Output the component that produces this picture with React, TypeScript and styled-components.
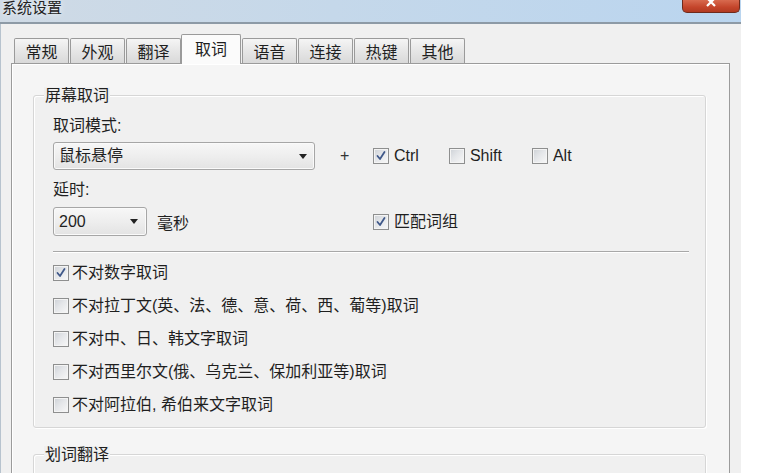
import React from "react";
import styled, { createGlobalStyle } from "styled-components";

const Global = createGlobalStyle`
  html, body { margin: 0; padding: 0; background: #ffffff; }
  body {
    font-family: "Liberation Sans", "Noto Sans CJK SC", sans-serif;
    font-size: 16px;
    color: #1f1f1f;
  }
  * { box-sizing: border-box; }
`;

const Page = styled.div`
  width: 776px;
  height: 473px;
  overflow: hidden;
  background: #ffffff;
`;

const Window = styled.div`
  width: 741px;
  height: 473px;
  display: flex;
  flex-direction: column;
  background: #f0f0f0;
  overflow: hidden;
`;

const TitleBar = styled.div`
  flex: none;
  height: 24px;
  display: flex;
  align-items: flex-start;
  justify-content: space-between;
  background: linear-gradient(90deg, #cfdae5 0%, #c5d8ea 45%, #bad5ef 100%);
  border-bottom: 2px solid #8d9aa6;
  overflow: hidden;
`;

const TitleText = styled.div`
  margin: 0 0 0 2px;
  font-size: 15px;
  line-height: 15px;
  color: #222;
  text-shadow: 0 0 6px rgba(255, 255, 255, 0.9);
`;

const CloseButton = styled.div`
  width: 58px;
  height: 13px;
  margin-right: 1px;
  display: flex;
  align-items: flex-start;
  justify-content: center;
  background: linear-gradient(180deg, #d86a4f 0%, #c4452b 60%, #b13a22 100%);
  border: 1px solid #6f2a1c;
  border-top: none;
  border-radius: 0 0 5px 5px;
`;

const Client = styled.div`
  flex: 1;
  display: flex;
  flex-direction: column;
  padding: 10px 11px 0 10px;
  border-left: 1px solid #b7c3ce;
  min-height: 0;
`;

const TabRow = styled.div`
  flex: none;
  height: 29px;
  display: flex;
  align-items: flex-end;
  gap: 1px;
  padding-left: 3px;
`;

const Tab = styled.div<{ $active?: boolean }>`
  width: ${(p) => (p.$active ? "60px" : "55px")};
  height: ${(p) => (p.$active ? "30px" : "25px")};
  margin-left: ${(p) => (p.$active ? "-1px" : "0")};
  margin-bottom: ${(p) => (p.$active ? "-1px" : "0")};
  position: relative;
  z-index: ${(p) => (p.$active ? 1 : 0)};
  display: flex;
  align-items: center;
  justify-content: center;
  padding-top: ${(p) => (p.$active ? "1px" : "4px")};
  font-size: 16px;
  line-height: 16px;
  color: #1f1f1f;
  border: 1px solid #9a9a9a;
  border-bottom: none;
  border-radius: 2px 2px 0 0;
  background: ${(p) =>
    p.$active ? "#fbfbfb" : "linear-gradient(180deg, #f5f5f5 0%, #e6e6e6 50%, #d9d9d9 100%)"};
`;

const Panel = styled.div`
  flex: 1;
  display: flex;
  flex-direction: column;
  padding: 31px 23px 0 21px;
  border: 1px solid #9b9b9b;
  border-bottom: none;
  background: #f5f5f5;
  box-shadow: inset 1px 1px 0 #ffffff;
  min-height: 0;
`;

const GroupBox = styled.div<{ $gapTop?: number }>`
  flex: none;
  display: flex;
  flex-direction: column;
  margin-top: ${(p) => p.$gapTop ?? 0}px;
  padding: 0 16px 12px 19px;
  border: 1px solid #d6d6d6;
  border-radius: 3px;
  background: #f0f0f0;
  box-shadow: inset 1px 1px 0 #ffffff, 1px 1px 0 #ffffff;
`;

const GroupTitle = styled.div`
  align-self: flex-start;
  margin: -9px 0 0 -9px;
  padding: 0 1px;
  font-size: 16px;
  line-height: 18px;
  background: #f0f0f0;
`;

const FieldLabel = styled.div<{ $top: number }>`
  margin-top: ${(p) => p.$top}px;
  font-size: 16px;
  line-height: 20px;
`;

const ControlRow = styled.div<{ $top: number }>`
  margin-top: ${(p) => p.$top}px;
  display: grid;
  grid-template-columns: 320px auto;
  align-items: center;
`;

const Cell = styled.div`
  display: flex;
  align-items: center;
`;

const Combo = styled.div<{ $w: number; $h: number; $arrowPad: number }>`
  width: ${(p) => p.$w}px;
  height: ${(p) => p.$h}px;
  display: flex;
  align-items: center;
  justify-content: space-between;
  padding: 0 ${(p) => p.$arrowPad}px 0 5px;
  border: 1px solid #a6a6a6;
  border-radius: 3px;
  background: linear-gradient(180deg, #f7f7f7 0%, #eeeeee 50%, #e3e3e3 100%);
  box-shadow: inset 0 0 0 1px #fafafa;
  font-size: 16px;
  line-height: 18px;
`;

const Plus = styled.span`
  margin-left: 25px;
  font-size: 16px;
  color: #333;
`;

const Unit = styled.span`
  margin-left: 10px;
  font-size: 16px;
`;

const CheckGroup = styled.div`
  display: flex;
  align-items: center;
  gap: 30px;
`;

const CheckLabel = styled.label<{ $gap: number }>`
  display: inline-flex;
  align-items: center;
  gap: ${(p) => p.$gap}px;
  font-size: 16px;
  line-height: 20px;
  white-space: nowrap;
`;

const Box = styled.span`
  width: 16px;
  height: 16px;
  flex: none;
  display: inline-flex;
  align-items: center;
  justify-content: center;
  border: 1px solid #8e8f8f;
  background: linear-gradient(135deg, #cdd1d6 0%, #e4e6e9 45%, #f8f8f8 100%);
  box-shadow: inset 0 0 0 1px #f4f4f4;
`;

const Separator = styled.div`
  margin-top: 15px;
  height: 2px;
  border-top: 1px solid #a8a8a8;
  border-bottom: 1px solid #ffffff;
`;

const CheckList = styled.div`
  margin-top: 10px;
  display: flex;
  flex-direction: column;
  gap: 13px;
`;

const BottomGroupBody = styled.div`
  height: 40px;
`;

const Arrow = () => (
  <svg width="8" height="5" viewBox="0 0 8 5">
    <path d="M0 0 L8 0 L4 5 Z" fill="#222" />
  </svg>
);

const Check = ({ label, checked, gap = 3 }: { label: string; checked?: boolean; gap?: number }) => (
  <CheckLabel $gap={gap}>
    <Box>
      {checked && (
        <svg width="12" height="12" viewBox="0 0 12 12">
          <path d="M2.5 6 L5 9 L9.5 2" fill="none" stroke="#3f5889" strokeWidth="1.8" strokeLinecap="round" strokeLinejoin="round" />
        </svg>
      )}
    </Box>
    <span>{label}</span>
  </CheckLabel>
);

const tabs = ["常规", "外观", "翻译", "取词", "语音", "连接", "热键", "其他"];

const options = [
  { label: "不对数字取词", checked: true },
  { label: "不对拉丁文(英、法、德、意、荷、西、葡等)取词" },
  { label: "不对中、日、韩文字取词" },
  { label: "不对西里尔文(俄、乌克兰、保加利亚等)取词" },
  { label: "不对阿拉伯, 希伯来文字取词" },
];

export default function App() {
  return (
    <Page>
      <Global />
      <Window>
        <TitleBar>
          <TitleText>系统设置</TitleText>
          <CloseButton>
            <svg width="12" height="8" viewBox="0 0 12 8">
              <path d="M2 -2 L10 6 M10 -2 L2 6" stroke="#ffffff" strokeWidth="2.2" />
            </svg>
          </CloseButton>
        </TitleBar>
        <Client>
          <TabRow>
            {tabs.map((t) => (
              <Tab key={t} $active={t === "取词"}>
                {t}
              </Tab>
            ))}
          </TabRow>
          <Panel>
            <GroupBox>
              <GroupTitle>屏幕取词</GroupTitle>
              <FieldLabel $top={11}>取词模式:</FieldLabel>
              <ControlRow $top={6}>
                <Cell>
                  <Combo $w={262} $h={28} $arrowPad={7}>
                    <span>鼠标悬停</span>
                    <Arrow />
                  </Combo>
                  <Plus>+</Plus>
                </Cell>
                <CheckGroup>
                  <Check label="Ctrl" checked gap={5} />
                  <Check label="Shift" gap={5} />
                  <Check label="Alt" gap={5} />
                </CheckGroup>
              </ControlRow>
              <FieldLabel $top={10}>延时:</FieldLabel>
              <ControlRow $top={7}>
                <Cell>
                  <Combo $w={94} $h={29} $arrowPad={8}>
                    <span>200</span>
                    <Arrow />
                  </Combo>
                  <Unit>毫秒</Unit>
                </Cell>
                <Cell>
                  <Check label="匹配词组" checked gap={5} />
                </Cell>
              </ControlRow>
              <Separator />
              <CheckList>
                {options.map((o) => (
                  <Check key={o.label} label={o.label} checked={o.checked} />
                ))}
              </CheckList>
            </GroupBox>
            <GroupBox $gapTop={26}>
              <GroupTitle>划词翻译</GroupTitle>
              <BottomGroupBody />
            </GroupBox>
          </Panel>
        </Client>
      </Window>
    </Page>
  );
}
